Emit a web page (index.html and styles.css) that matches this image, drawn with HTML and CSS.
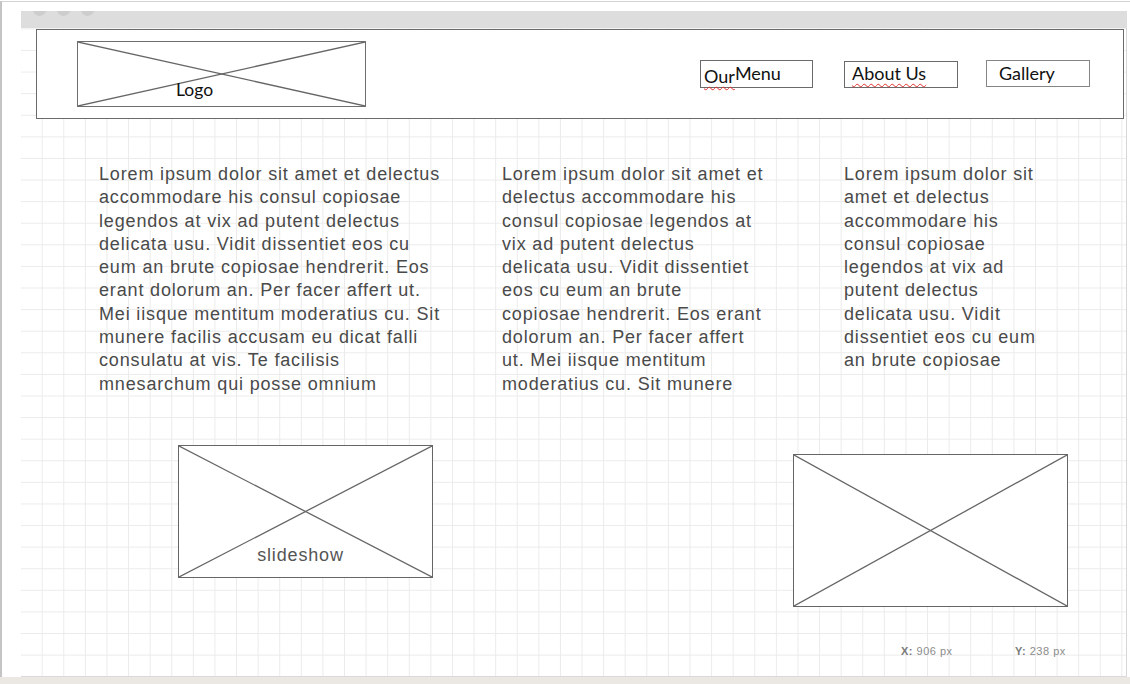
FILE: index.html
```html
<!DOCTYPE html>
<html lang="en">
<head>
<meta charset="utf-8">
<title>Wireframe</title>
<link rel="stylesheet" href="styles.css">
</head>
<body>
<div class="frame">
  <div class="inner">
    <div class="window">
      <div class="titlebar">
        <span class="dot"></span><span class="dot"></span><span class="dot"></span>
      </div>
      <div class="canvas">
        <header class="site-header">
          <div class="ph logo">
            <svg class="cross" viewBox="0 0 100 100" preserveAspectRatio="none"><line x1="0" y1="0" x2="100" y2="100" vector-effect="non-scaling-stroke"/><line x1="0" y1="100" x2="100" y2="0" vector-effect="non-scaling-stroke"/></svg>
            <span class="logo-label">Logo</span>
          </div>
          <nav class="nav">
            <div class="nav-item item-menu"><span class="spell">Our</span><span class="raised">Menu</span></div>
            <div class="nav-item item-about"><span class="spell">About Us</span></div>
            <div class="nav-item item-gallery">Gallery</div>
          </nav>
        </header>

        <section class="columns">
          <p class="col col-1">Lorem ipsum dolor sit amet et delectus<br>accommodare his consul copiosae<br>legendos at vix ad putent delectus<br>delicata usu. Vidit dissentiet eos cu<br>eum an brute copiosae hendrerit. Eos<br>erant dolorum an. Per facer affert ut.<br>Mei iisque mentitum moderatius cu. Sit<br>munere facilis accusam eu dicat falli<br>consulatu at vis. Te facilisis<br>mnesarchum qui posse omnium</p>
          <p class="col col-2">Lorem ipsum dolor sit amet et<br>delectus accommodare his<br>consul copiosae legendos at<br>vix ad putent delectus<br>delicata usu. Vidit dissentiet<br>eos cu eum an brute<br>copiosae hendrerit. Eos erant<br>dolorum an. Per facer affert<br>ut. Mei iisque mentitum<br>moderatius cu. Sit munere</p>
          <p class="col col-3">Lorem ipsum dolor sit<br>amet et delectus<br>accommodare his<br>consul copiosae<br>legendos at vix ad<br>putent delectus<br>delicata usu. Vidit<br>dissentiet eos cu eum<br>an brute copiosae</p>
        </section>

        <section class="media">
          <div class="ph slideshow">
            <svg class="cross" viewBox="0 0 100 100" preserveAspectRatio="none"><line x1="0" y1="0" x2="100" y2="100" vector-effect="non-scaling-stroke"/><line x1="0" y1="100" x2="100" y2="0" vector-effect="non-scaling-stroke"/></svg>
            <span class="ph-label">slideshow</span>
          </div>
          <div class="ph picture">
            <svg class="cross" viewBox="0 0 100 100" preserveAspectRatio="none"><line x1="0" y1="0" x2="100" y2="100" vector-effect="non-scaling-stroke"/><line x1="0" y1="100" x2="100" y2="0" vector-effect="non-scaling-stroke"/></svg>
          </div>
        </section>

        <div class="coords">
          <span class="coord coord-x"><b>X:</b> 906 px</span>
          <span class="coord"><b>Y:</b> 238 px</span>
        </div>
      </div>
      <div class="statusbar"></div>
    </div>
  </div>
</div>
</body>
</html>
```

FILE: styles.css
```css
html, body {
  margin: 0;
  padding: 0;
}

body {
  background: #ebe7e3;
  font-family: "Liberation Sans", Arial, sans-serif;
  overflow: hidden;
}

.frame {
  background: #ffffff;
  padding-top: 1px;
}

.inner {
  border-top: 1px solid #d2d2d2;
  border-left: 2px solid #c4c4c4;
  height: 666px;
  padding: 9px 0 0 19px;
}

.window {
  width: 1106px;
}

.titlebar {
  height: 17px;
  background: #dddddd;
  overflow: hidden;
  display: flex;
  align-items: flex-start;
  gap: 11px;
  padding-left: 12px;
}

.dot {
  width: 13px;
  height: 13px;
  border-radius: 50%;
  background: #cdcdcd;
  margin-top: -8px;
  flex: none;
}

.canvas {
  height: 648px;
  box-sizing: border-box;
  border-right: 1px solid #d6d6d6;
  background-color: #ffffff;
  background-image:
    linear-gradient(to right, #ebebeb 1px, transparent 1px),
    linear-gradient(to bottom, #ebebeb 1px, transparent 1px);
  background-size: 21.6px 21.6px;
  background-position: 20.7px 0.4px;
  overflow: hidden;
}

.statusbar {
  height: 8px;
  background: #e4e4e4;
  border-top: 1px solid #dadada;
  box-sizing: border-box;
}

/* placeholders */
.ph {
  position: relative;
  box-sizing: border-box;
  border: 1px solid #666666;
  background: #ffffff;
  flex: none;
}

.cross {
  position: absolute;
  left: 0;
  top: 0;
  width: 100%;
  height: 100%;
  stroke: #666666;
  stroke-width: 1.3;
  fill: none;
}

/* header */
.site-header {
  box-sizing: border-box;
  width: 1088px;
  height: 90px;
  margin: 1px 0 0 15px;
  border: 1px solid #6b6b6b;
  background: #ffffff;
  display: flex;
  align-items: flex-start;
}

.logo {
  width: 289px;
  height: 66px;
  margin: 11px 0 0 40px;
  border-color: #6e6e6e;
}

.logo-label {
  position: relative;
  display: block;
  padding: 38px 0 0 98px;
  font-family: Lato, "Open Sans", sans-serif;
  font-size: 17.5px;
  line-height: 20px;
  color: #111111;
}

.nav {
  margin-left: auto;
  display: flex;
  align-items: flex-start;
  padding-right: 33px;
}

.nav-item {
  box-sizing: border-box;
  border: 1px solid #6a6a6a;
  font-family: Lato, "Open Sans", sans-serif;
  font-size: 18px;
  line-height: 20px;
  color: #111111;
  white-space: nowrap;
}

.item-menu {
  width: 113px;
  height: 28px;
  margin-top: 30px;
  padding: 2px 0 0 3px;
}

.item-about {
  width: 114px;
  height: 27px;
  margin: 31px 0 0 31px;
  padding: 1px 0 0 7px;
}

.item-gallery {
  width: 104px;
  height: 27px;
  margin: 30px 0 0 28px;
  padding: 2px 0 0 12px;
  border-color: #858585;
}

.spell {
  text-decoration: underline wavy #e0302c;
  text-decoration-thickness: 1px;
  text-underline-offset: 3px;
}

.raised {
  vertical-align: 3px;
}

/* text columns */
.columns {
  display: flex;
  padding-left: 78px;
  margin-top: 44px;
}

.col {
  margin: 0;
  font-size: 18px;
  line-height: 23.3px;
  letter-spacing: 0.84px;
  color: #4a4a4a;
  white-space: nowrap;
}

.col-1 {
  width: 403px;
}

.col-2 {
  width: 342px;
}

.col-3 {
  width: 220px;
}

/* images */
.media {
  display: flex;
  align-items: flex-start;
  margin-top: 49px;
}

.slideshow {
  width: 255px;
  height: 133px;
  margin-left: 157px;
  display: flex;
  justify-content: center;
  align-items: flex-end;
  padding: 0 10px 11px 0;
}

.ph-label {
  position: relative;
  font-size: 18px;
  line-height: 21px;
  letter-spacing: 0.84px;
  color: #555555;
}

.picture {
  width: 275px;
  height: 153px;
  margin: 9px 0 0 360px;
}

/* coordinates */
.coords {
  display: flex;
  padding-left: 880px;
  margin-top: 38px;
  font-size: 11px;
  line-height: 13px;
  letter-spacing: 0.5px;
  color: #8c8c8c;
}

.coord b {
  color: #7a7a7a;
}

.coord-x {
  width: 114px;
}
```
